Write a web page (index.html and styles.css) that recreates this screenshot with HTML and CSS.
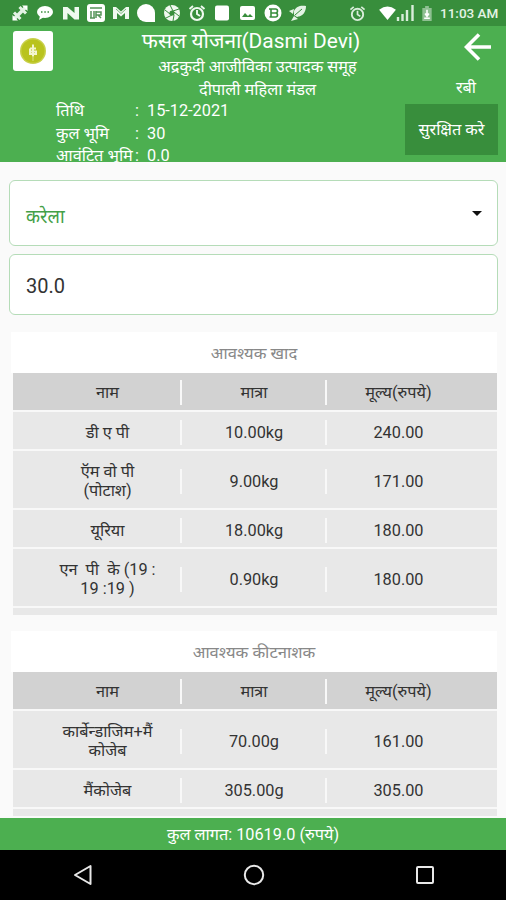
FILE: index.html
```html
<!DOCTYPE html>
<html lang="hi">

<head>
  <meta charset="UTF-8">
  <title>फसल योजना</title>
  <link rel="stylesheet" href="styles.css">
</head>

<body>

  <div class="status-bar">
    <div class="status-icons">
      <svg viewBox="0 0 18 18"><path d="M4 14L14 4" stroke="#e4f3e5" stroke-width="3.500"/><path d="M8.500 3l6.500 6.500M3 8.500L9.500 15" stroke="#e4f3e5" stroke-width="3"/><path d="M11 1.500l5.500 0 0 5.500zM1.500 11v5.500H7z" fill="#fff"/></svg>
      <svg viewBox="0 0 18 18"><ellipse cx="9" cy="8" rx="8" ry="6" fill="#fff"/><path d="M4 12l-1 4 5-3z" fill="#fff"/><path d="M5 8h1.500M8.300 8h1.500M11.500 8H13" stroke="#388e3c" stroke-width="1.300"/></svg>
      <svg viewBox="0 0 18 18"><path d="M1 3h4.500l7 6V3H17v12.500h-4.500l-7-6.500v6.500H1z" fill="#eff9ef"/></svg>
      <svg viewBox="0 0 18 18"><rect x="0" y="0" width="18" height="18" rx="3" fill="#fff"/><path d="M3 4h12M4 7v7h3V7M9 7v7M9 8h5v3h-5M11 11l3 3M3 14h5" fill="none" stroke="#55945a" stroke-width="1.500"/></svg>
      <svg viewBox="0 0 18 18"><path d="M1 15V3h3l5 4.500L14 3h3v12h-4V9l-4 3.500L5 9v6z" fill="#eff9ef"/><path d="M4 5l5 4.500L14 5" fill="none" stroke="#7fb982" stroke-width="1"/></svg>
      <svg viewBox="0 0 18 18"><path d="M9 0a9 9 0 0 1 9 9v9H9A9 9 0 0 1 9 0z" fill="#fff"/></svg>
      <svg viewBox="0 0 18 18"><circle cx="9" cy="9" r="8" fill="#f0f8f0"/><circle cx="9" cy="9" r="2.600" fill="#388e3c"/><path d="M7 1l3 6M16 5l-6 2M16 12l-5-4M10 17l1-6M3 14l6-3M2 6l5 4" stroke="#388e3c" stroke-width="1"/></svg>
      <svg viewBox="0 0 18 18"><circle cx="9" cy="10" r="6" fill="none" stroke="#eff9ef" stroke-width="2.200"/><path d="M9 6v4l3 2M1.500 5l3.500-3M13 2l3.500 3" fill="none" stroke="#eff9ef" stroke-width="1.900"/></svg>
      <svg viewBox="0 0 18 18"><rect x="2" y="1.500" width="14" height="15" rx="2" fill="#fff"/></svg>
      <svg viewBox="0 0 18 18"><rect x="1" y="2" width="15" height="14" rx="2" fill="#fff"/><path d="M3 13l3-4 3 3 2-2 3 3z" fill="#388e3c"/></svg>
      <svg viewBox="0 0 18 18"><circle cx="9" cy="9" r="8.500" fill="#fff"/><path d="M5 5h6.500a2 2 0 0 1 0 4H7h4.500a2 2 0 0 1 0 4H5.500M7 5v8" fill="none" stroke="#388e3c" stroke-width="1.600"/></svg>
      <svg viewBox="0 0 18 18"><path d="M5 7c2-5 7-6 12-5 0 6-3 10-9 11l-3-2zM0 7l5-2-1 5zM2 17l3-5 4 3z" fill="#e4f3e5"/><path d="M6 11l7-6M9 13l3 2" stroke="#388e3c" stroke-width="1"/></svg>
    </div>
    <div class="status-system">
      <svg class="alarm" viewBox="0 0 18 18"><circle cx="9" cy="10" r="6" fill="none" stroke="#d9edda" stroke-width="2"/><path d="M9 6v4l3 2M1.500 5l3.500-3M13 2l3.500 3" fill="none" stroke="#d9edda" stroke-width="1.800"/></svg>
      <svg class="wifi" viewBox="0 0 18 15"><path d="M0 4Q9-3 18 4L9 15z" fill="#fff"/></svg>
      <svg class="signal" viewBox="0 0 18 16"><path d="M1.500 12v4M6 9v7M10.500 5v11M16 0v16" stroke="#d9edda" stroke-width="2.400"/></svg>
      <svg class="battery" viewBox="0 0 10 16"><path d="M3 0h4v2h3v14H0V2h3z" fill="#8fc092"/><path d="M5 4v6M3 8l2 3 2-3M2 13h6" fill="none" stroke="#fff" stroke-width="1.700"/></svg>
      <span class="clock">11:03 AM</span>
    </div>
  </div>

  <header class="header">
    <div class="header-top">
      <div class="logo">
        <svg viewBox="0 0 40 40"><circle cx="20" cy="20" r="13" fill="#c8d04a"/><circle cx="20" cy="20" r="11.500" fill="#b9c31e"/><path d="M20 13.500v12M17 17.500h6M17 17.500v5.500h6v-2.500h-6" fill="none" stroke="#f3f5cf" stroke-width="2"/><path d="M20 26v4" stroke="#dce085" stroke-width="1"/></svg>
      </div>
      <div class="titles">
        <h1>फसल योजना(Dasmi Devi)</h1>
        <p>अद्रकुदी आजीविका उत्पादक समूह</p>
        <p>दीपाली महिला मंडल</p>
      </div>
      <div class="header-side">
        <svg class="back" viewBox="0 0 28 28"><path d="M27 14H2.500M15 1.500L2.500 14 15 26.500" fill="none" stroke="#fff" stroke-width="3.600"/></svg>
        <span class="season">रबी</span>
      </div>
    </div>
    <div class="header-bottom">
      <div class="info">
        <span>तिथि</span><span>:</span><span>15-12-2021</span>
        <span>कुल भूमि</span><span>:</span><span>30</span>
        <span>आवंटित भूमि</span><span>:</span><span>0.0</span>
      </div>
      <button class="save">सुरक्षित करे</button>
    </div>
  </header>

  <main class="content">
    <div class="field crop">
      <span>करेला</span>
      <svg class="caret" viewBox="0 0 10 5"><path d="M0 0h10L5 5z" fill="#111"/></svg>
    </div>
    <div class="field area">30.0</div>

    <section class="card">
      <h2>आवश्यक खाद</h2>
      <div class="table">
        <div class="row head"><div class="name">नाम</div><div class="qty">मात्रा</div><div class="price">मूल्य(रुपये)</div></div>
        <div class="row"><div class="name">डी ए पी</div><div class="qty">10.00kg</div><div class="price">240.00</div></div>
        <div class="row tall"><div class="name">ऍम वो पी<br>(पोटाश)</div><div class="qty">9.00kg</div><div class="price">171.00</div></div>
        <div class="row"><div class="name">यूरिया</div><div class="qty">18.00kg</div><div class="price">180.00</div></div>
        <div class="row tall"><div class="name">एन&nbsp; पी&nbsp; के (19 :<br>19 :19 )</div><div class="qty">0.90kg</div><div class="price">180.00</div></div>
        <div class="row cut"></div>
      </div>
    </section>

    <section class="card">
      <h2>आवश्यक कीटनाशक</h2>
      <div class="table">
        <div class="row head"><div class="name">नाम</div><div class="qty">मात्रा</div><div class="price">मूल्य(रुपये)</div></div>
        <div class="row tall"><div class="name">कार्बेन्डाजिम+मैं<br>कोजेब</div><div class="qty">70.00g</div><div class="price">161.00</div></div>
        <div class="row"><div class="name">मैंकोजेब</div><div class="qty">305.00g</div><div class="price">305.00</div></div>
        <div class="row cut"></div>
      </div>
    </section>
  </main>

  <footer class="total">कुल लागत: 10619.0 (रुपये)</footer>

  <nav class="nav-bar">
    <svg viewBox="0 0 22 22"><path d="M18.500 2v18L3 11z" fill="none" stroke="#e8e8e8" stroke-width="2" stroke-linejoin="round"/></svg>
    <svg viewBox="0 0 22 22"><circle cx="11" cy="11" r="9.200" fill="none" stroke="#e8e8e8" stroke-width="2"/></svg>
    <svg viewBox="0 0 22 22"><rect x="3" y="3" width="16" height="16" rx="1" fill="none" stroke="#e8e8e8" stroke-width="2"/></svg>
  </nav>

</body>

</html>
```
FILE: styles.css
```css
* {
  box-sizing: border-box;
}

body {
  margin: 0;
  width: 506px;
  height: 900px;
  display: flex;
  flex-direction: column;
  overflow: hidden;
  background: #fafafa;
  font-family: Roboto, "Noto Sans Devanagari", "Noto Sans", sans-serif;
  font-size: 16.3px;
  color: #333;
}

h1, h2, p {
  margin: 0;
  font-weight: 400;
}

svg {
  display: block;
}

/* status bar */
.status-bar {
  flex: none;
  height: 26px;
  padding: 0 8px 0 11px;
  display: flex;
  align-items: center;
  justify-content: space-between;
  background: #388e3c;
}

.status-icons {
  display: flex;
  gap: 7.3px;
}

.status-icons svg {
  width: 18px;
  height: 18px;
}

.status-system {
  display: flex;
  align-items: center;
}

.alarm {
  width: 17px;
  height: 17px;
  margin-right: 13px;
}

.wifi {
  width: 17px;
  height: 14px;
}

.signal {
  width: 19px;
  height: 16px;
  margin-right: 7px;
}

.battery {
  width: 10px;
  height: 15px;
  margin-right: 8px;
}

.clock {
  width: 58px;
  font-size: 13.5px;
  font-weight: 500;
  white-space: nowrap;
  color: #e4f3e5;
}

/* header */
.header {
  flex: none;
  height: 136px;
  overflow: hidden;
  background: #4caf50;
  color: #fff;
}

.header-top {
  height: 74px;
  padding: 0 8px 0 13px;
  display: grid;
  grid-template-columns: 40px 1fr 49px;
}

.logo {
  width: 40px;
  height: 40px;
  margin-top: 5px;
  border-radius: 3px;
  background: #fff;
}

.titles {
  padding-top: 2px;
  text-align: center;
}

.titles h1 {
  font-size: 20.9px;
  line-height: 27px;
}

.titles p {
  padding-left: 13px;
  line-height: 23px;
}

.header-side {
  display: flex;
  flex-direction: column;
  padding-top: 7px;
}

.back {
  width: 28px;
  height: 28px;
  margin-right: 6px;
  align-self: flex-end;
}

.season {
  margin-top: 15px;
  padding-right: 15px;
  text-align: center;
  line-height: 24px;
}

.header-bottom {
  display: flex;
  justify-content: space-between;
  padding: 0 8px 0 56px;
}

.info {
  display: grid;
  grid-template-columns: 79px 12px auto;
  align-content: start;
  line-height: 22.7px;
  white-space: nowrap;
}

.save {
  width: 93px;
  height: 51px;
  margin-top: 4px;
  padding: 3px 0 0;
  border: none;
  background: #388e3c;
  color: #fff;
  font: inherit;
  white-space: nowrap;
}

/* fields and tables */
.content {
  flex: 1;
  min-height: 0;
  overflow: hidden;
  padding: 18px 8px 0 9px;
}

.field {
  display: flex;
  align-items: center;
  padding: 0 15px 0 16px;
  border: 1px solid #b5dcb8;
  border-radius: 6px;
  background: #fff;
}

.crop {
  height: 66px;
  margin-bottom: 8px;
  padding-top: 10px;
  justify-content: space-between;
  font-size: 18.3px;
  color: #43a047;
}

.caret {
  width: 10px;
  height: 5px;
  margin-top: -10px;
}

.area {
  height: 61px;
  padding-top: 2px;
  font-size: 20px;
}

.card {
  width: 486px;
  margin: 17px 0 0 2px;
}

.card + .card {
  margin-top: 16px;
}

.card h2 {
  height: 41px;
  background: #fff;
  text-align: center;
  font-size: 16.6px;
  line-height: 43px;
  color: #888;
}

.table {
  width: 484px;
  margin-left: 2px;
}

.row {
  height: 39px;
  padding-top: 3px;
  display: flex;
  align-items: center;
  border-bottom: 2px solid #f8f8f8;
  background: #e8e8e8;
  text-align: center;
  line-height: 19px;
}

.head {
  padding-top: 2px;
  background: #d2d2d2;
}

.tall {
  height: 59px;
}

.cut {
  height: 7px;
  border-bottom: none;
}

.name {
  width: 167px;
  padding-left: 22px;
}

.qty {
  width: 147px;
  padding: 3px 0 3px 1px;
  border-left: 2px solid #f8f8f8;
  border-right: 2px solid #f8f8f8;
}

.price {
  width: 170px;
  padding-right: 27px;
}

/* bottom */
.total {
  flex: none;
  height: 32px;
  background: #4caf50;
  text-align: center;
  line-height: 34px;
  color: #fff;
}

.nav-bar {
  flex: none;
  height: 50px;
  display: flex;
  align-items: center;
  justify-content: space-between;
  padding: 0 70px 0 72px;
  background: #000;
}

.nav-bar svg {
  width: 22px;
  height: 22px;
}
```
